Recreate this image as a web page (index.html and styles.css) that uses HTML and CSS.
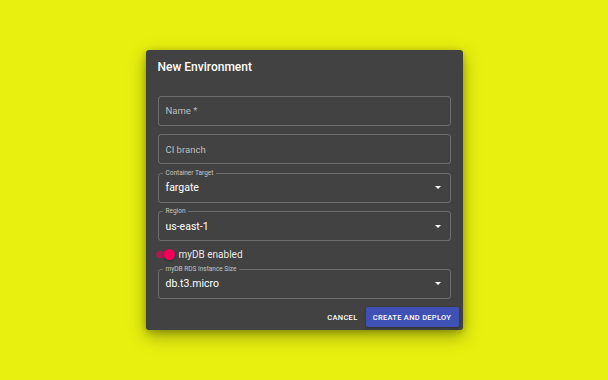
FILE: index.html
```html
<!DOCTYPE html>
<html lang="en">
<head>
    <meta charset="UTF-8">
    <meta name="viewport" content="width=device-width, initial-scale=1.0">
    <title>New Environment</title>
    <link rel="stylesheet" href="styles.css">
</head>
<body>
    <div class="dialog">
        <h2 class="dialog-title">New Environment</h2>
        <div class="dialog-content">
            <div class="field">
                <span class="placeholder">Name *</span>
            </div>
            <div class="field">
                <span class="placeholder">CI branch</span>
            </div>
            <div class="field select">
                <span class="label">Container Target</span>
                <span class="value">fargate</span>
                <span class="arrow"></span>
            </div>
            <div class="field select">
                <span class="label">Region</span>
                <span class="value">us-east-1</span>
                <span class="arrow"></span>
            </div>
            <div class="switch-row">
                <span class="switch"><span class="thumb"></span></span>
                <span class="switch-label">myDB enabled</span>
            </div>
            <div class="field select">
                <span class="label">myDB RDS Instance Size</span>
                <span class="value">db.t3.micro</span>
                <span class="arrow"></span>
            </div>
        </div>
        <div class="dialog-actions">
            <button class="btn btn-text">Cancel</button>
            <button class="btn btn-primary">Create and Deploy</button>
        </div>
    </div>
</body>
</html>
```

FILE: styles.css
```css
body {
    margin: 0;
    height: 100vh;
    display: flex;
    align-items: center;
    justify-content: center;
    background-color: #e8f00f;
    font-family: Roboto, 'Liberation Sans', sans-serif;
}

.dialog {
    width: 317px;
    height: 280px;
    box-sizing: border-box;
    background-color: #424242;
    border-radius: 3px;
    box-shadow: 0 6px 18px rgba(0, 0, 0, 0.35), 0 2px 6px rgba(0, 0, 0, 0.2);
    display: flex;
    flex-direction: column;
    color: #ffffff;
}

.dialog-title {
    margin: 0;
    padding: 8px 12px 0;
    height: 46px;
    box-sizing: border-box;
    font-size: 12px;
    line-height: 18px;
    font-weight: 500;
}

.dialog-content {
    padding: 0 12px;
    display: flex;
    flex-direction: column;
}

.field {
    position: relative;
    height: 30px;
    box-sizing: border-box;
    border: 1px solid rgba(255, 255, 255, 0.23);
    border-radius: 3px;
    margin-bottom: 8.5px;
    display: flex;
    align-items: center;
    padding: 0 7px;
}

.placeholder {
    font-size: 9.5px;
    color: rgba(255, 255, 255, 0.65);
}

.label {
    position: absolute;
    top: -5px;
    left: 4px;
    padding: 0 3px;
    background-color: #424242;
    font-size: 6.5px;
    line-height: 8px;
    color: rgba(255, 255, 255, 0.7);
}

.value {
    font-size: 10.5px;
    color: #ffffff;
}

.arrow {
    margin-left: auto;
    margin-right: 2px;
    width: 0;
    height: 0;
    border-left: 3px solid transparent;
    border-right: 3px solid transparent;
    border-top: 3px solid #ffffff;
}

.switch-row {
    height: 14px;
    margin-top: -2.5px;
    margin-bottom: 7.5px;
    display: flex;
    align-items: center;
}

.switch {
    position: relative;
    width: 17px;
    height: 7px;
    margin-left: -2px;
    border-radius: 4px;
    background-color: rgba(245, 0, 87, 0.55);
}

.thumb {
    position: absolute;
    top: -2px;
    right: -2px;
    width: 11px;
    height: 11px;
    border-radius: 50%;
    background-color: #f50057;
    box-shadow: 0 1px 2px rgba(0, 0, 0, 0.3);
}

.switch-label {
    margin-left: 6px;
    font-size: 10px;
    color: rgba(255, 255, 255, 0.9);
}

.dialog-actions {
    margin-top: auto;
    padding: 0 4px 3px 0;
    display: flex;
    justify-content: flex-end;
    gap: 8px;
}

.btn {
    height: 20px;
    border: none;
    border-radius: 2px;
    font-family: Roboto, 'Liberation Sans', sans-serif;
    font-size: 7.5px;
    font-weight: 500;
    letter-spacing: 0.3px;
    text-transform: uppercase;
    color: #ffffff;
    cursor: pointer;
}

.btn-text {
    background: transparent;
    padding: 0;
}

.btn-primary {
    width: 93px;
    padding: 0;
    background-color: #3f51b5;
    box-shadow: 0 1px 3px rgba(0, 0, 0, 0.3);
}
```
